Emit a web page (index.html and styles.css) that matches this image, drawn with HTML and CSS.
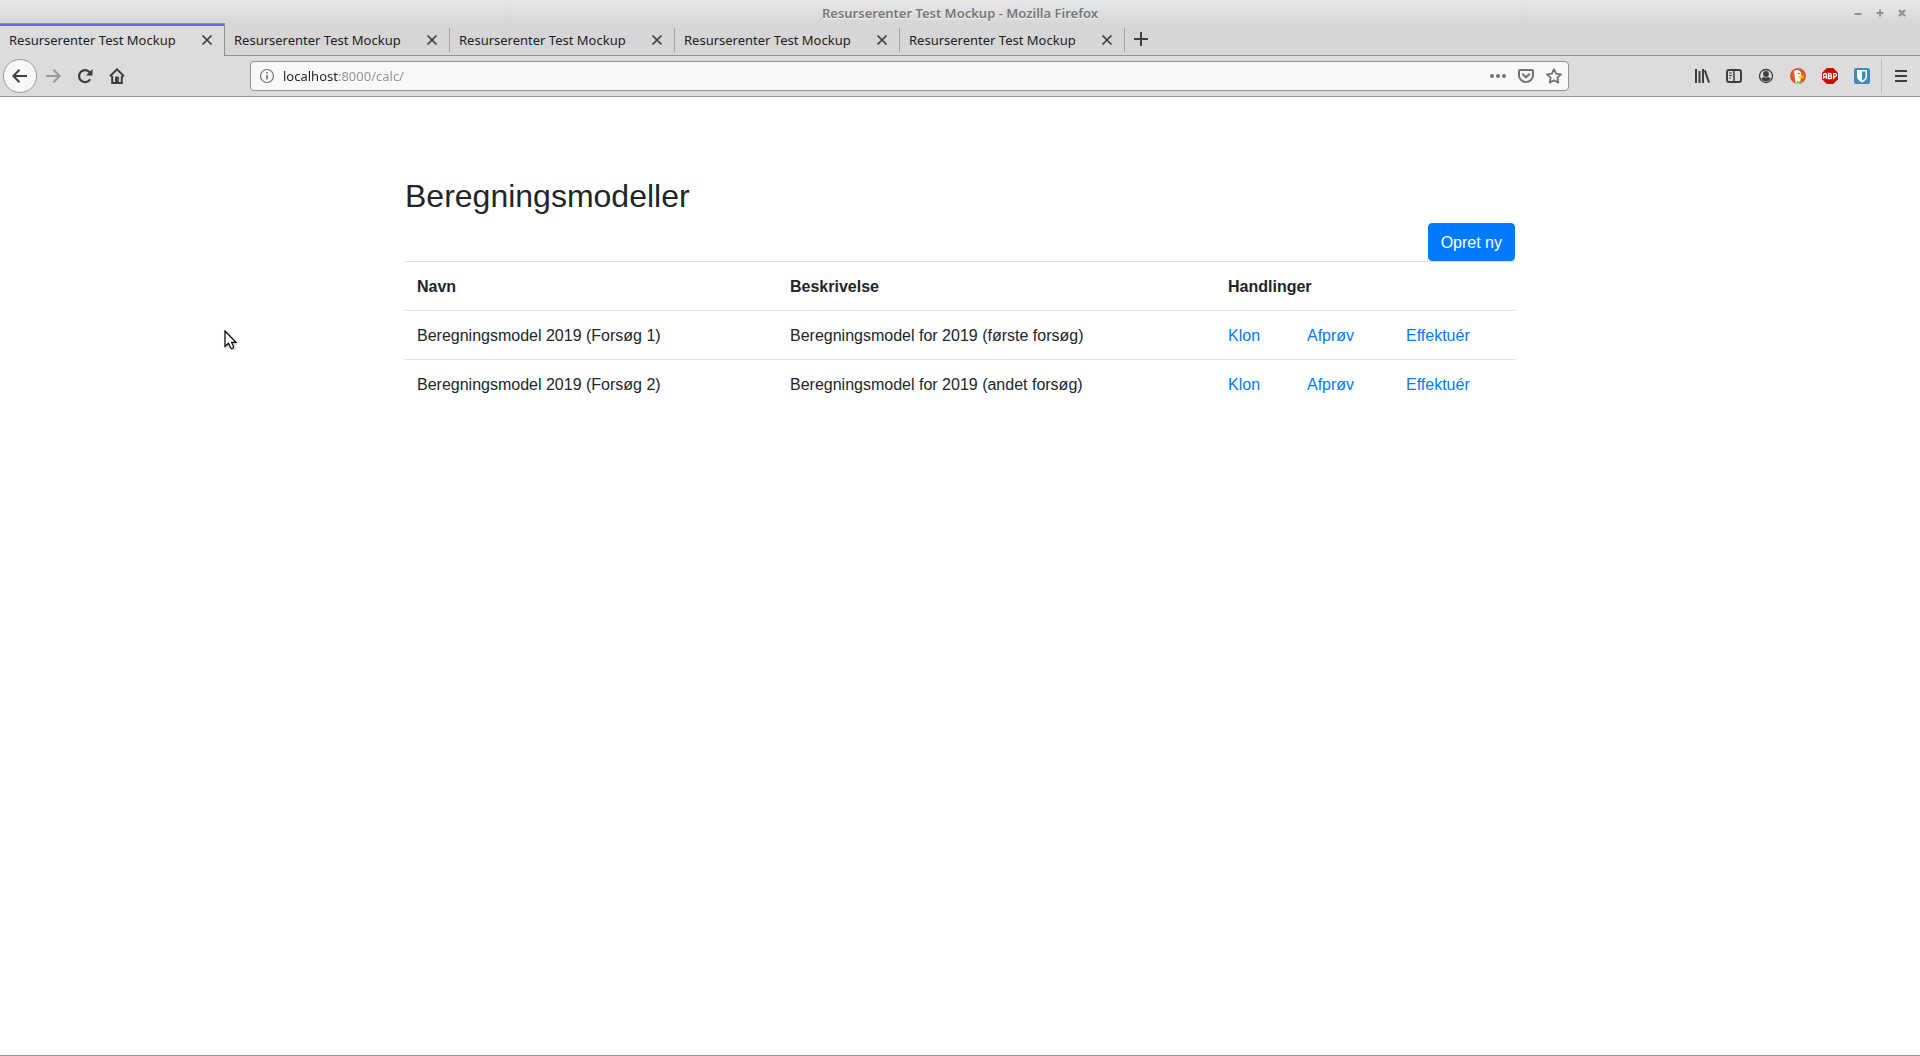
FILE: index.html
```html
<!DOCTYPE html>
<html lang="da">
<head>
<meta charset="utf-8">
<title>Resurserenter Test Mockup</title>
<link rel="stylesheet" href="styles.css">
</head>
<body>
<div class="window">
  <header class="chrome">
    <div class="titlebar">
      <span class="window-title">Resurserenter Test Mockup - Mozilla Firefox</span>
      <div class="window-controls">
        <button type="button" aria-label="Minimer"><svg width="10" height="10" viewBox="0 0 10 10"><path d="M1.500 6h7" stroke-width="2"/></svg></button>
        <button type="button" aria-label="Maksimer"><svg width="10" height="10" viewBox="0 0 10 10"><path d="M1.500 5h7M5 1.500v7" stroke-width="2"/></svg></button>
        <button type="button" aria-label="Luk vindue"><svg width="10" height="10" viewBox="0 0 10 10"><path d="M2 2l6 6M8 2l-6 6" stroke-width="2.400"/></svg></button>
      </div>
    </div>
    <div class="tabs">
      <div class="tab tab-active"><span>Resurserenter Test Mockup</span><button type="button" aria-label="Luk faneblad"><svg width="12" height="12" viewBox="0 0 12 12"><path d="M1.500 1.500l9 9M10.500 1.500l-9 9" stroke-width="1.700"/></svg></button></div>
      <div class="tab"><span>Resurserenter Test Mockup</span><button type="button" aria-label="Luk faneblad"><svg width="12" height="12" viewBox="0 0 12 12"><path d="M1.500 1.500l9 9M10.500 1.500l-9 9" stroke-width="1.700"/></svg></button></div>
      <div class="tab"><span>Resurserenter Test Mockup</span><button type="button" aria-label="Luk faneblad"><svg width="12" height="12" viewBox="0 0 12 12"><path d="M1.500 1.500l9 9M10.500 1.500l-9 9" stroke-width="1.700"/></svg></button></div>
      <div class="tab"><span>Resurserenter Test Mockup</span><button type="button" aria-label="Luk faneblad"><svg width="12" height="12" viewBox="0 0 12 12"><path d="M1.500 1.500l9 9M10.500 1.500l-9 9" stroke-width="1.700"/></svg></button></div>
      <div class="tab"><span>Resurserenter Test Mockup</span><button type="button" aria-label="Luk faneblad"><svg width="12" height="12" viewBox="0 0 12 12"><path d="M1.500 1.500l9 9M10.500 1.500l-9 9" stroke-width="1.700"/></svg></button></div>
      <div class="tab-rest"><button type="button" aria-label="Nyt faneblad"><svg width="16" height="16" viewBox="0 0 16 16"><path d="M8 1v14M1 8h14"/></svg></button></div>
    </div>
    <nav class="toolbar">
      <button type="button" class="tool back" aria-label="Tilbage"><svg width="16" height="16" viewBox="0 0 16 16"><path d="M15 8H1.500M7.500 1.800L1.300 8l6.200 6.200"/></svg></button>
      <button type="button" class="tool forward" aria-label="Frem"><svg width="16" height="16" viewBox="0 0 16 16"><path d="M1 8h13.500M8.500 1.800L14.700 8l-6.200 6.200"/></svg></button>
      <button type="button" class="tool" aria-label="Genindlæs"><svg width="16" height="16" viewBox="0 0 16 16"><path d="M13.200 11.200A6 6 0 1 1 12.600 4.200" stroke-width="2.200"/><path d="M15.500 1v6.500H9z" class="solid"/></svg></button>
      <button type="button" class="tool" aria-label="Hjem"><svg width="16" height="16" viewBox="0 0 16 16"><path d="M1 8.200L8 1.400l7 6.800M3.200 8v7h9.600V8"/><path d="M6 15V9.500a1 1 0 0 1 1-1h2a1 1 0 0 1 1 1V15z" class="solid"/><path d="M9 11.500v1" stroke="#ddd" stroke-width="1"/></svg></button>
      <div class="spacer"></div>
      <div class="urlbar">
        <button type="button" aria-label="Oplysninger om siden"><svg width="16" height="16" viewBox="0 0 16 16"><circle cx="8" cy="8" r="6.500" stroke-width="1.200"/><path d="M8 7v4.500M8 4v1.600" stroke-width="1.700"/></svg></button>
        <input type="text" class="url" value="localhost:8000/calc/" aria-label="Adresse" spellcheck="false">
        <button type="button" aria-label="Sidehandlinger"><svg width="16" height="16" viewBox="0 0 16 16"><g class="solid"><circle cx="2" cy="8" r="2"/><circle cx="8" cy="8" r="2"/><circle cx="14" cy="8" r="2"/></g></svg></button>
        <button type="button" aria-label="Gem til Pocket"><svg width="16" height="16" viewBox="0 0 16 16"><path d="M2 2h12a1 1 0 0 1 1 1v4.500a7 6.500 0 0 1-14 0V3a1 1 0 0 1 1-1z"/><path d="M4.800 6.300L8 9.300l3.200-3" stroke-linecap="round"/></svg></button>
        <button type="button" aria-label="Bogmærk siden"><svg width="16" height="16" viewBox="0 0 16 16"><path d="M8 1.200l2.100 4.500 4.900.6-3.600 3.300.9 5L8 12.200l-4.300 2.400.9-5L1 6.300l4.900-.6z" stroke-width="1.800" stroke-linejoin="round"/></svg></button>
      </div>
      <div class="spacer"></div>
      <button type="button" class="tool" aria-label="Bibliotek"><svg width="16" height="16" viewBox="0 0 16 16"><path d="M2 1v14M5.500 3v12M9 1v14" stroke-width="2"/><path d="M10.800 2.200L15 14.600"/></svg></button>
      <button type="button" class="tool" aria-label="Sidepanel"><svg width="16" height="16" viewBox="0 0 16 16"><rect x="1" y="2" width="14" height="12" rx="2"/><path d="M8 2v12" stroke-width="1.500"/><path d="M3 5h3M3 7.500h3M3 10h2" stroke-width="1"/></svg></button>
      <button type="button" class="tool" aria-label="Konto"><svg width="16" height="16" viewBox="0 0 16 16"><circle cx="8" cy="8" r="6.500" stroke-width="1.300"/><g class="solid"><circle cx="8" cy="6" r="2.900"/><path d="M3.200 10.500Q5 9 6.500 9.200Q8 10 9.500 9.200Q11 9 12.800 10.500A5.500 5.500 0 0 1 3.200 10.500z"/></g></svg></button>
      <button type="button" class="tool" aria-label="DuckDuckGo"><svg width="16" height="16" viewBox="0 0 16 16" class="logo"><circle cx="8" cy="8" r="8" fill="#de5833"/><path d="M4 3.500Q5 1.500 7.500 2Q11 2.400 11 6l-.5 6-1 3.700Q7 15.800 5.600 15Z" fill="#fff"/><circle cx="8.800" cy="5.500" r=".8" fill="#2d4f8e"/><path d="M8.800 8Q11 6.800 14 7.300L12 8.700l2.500.2Q12 10.800 9 10.200z" fill="#fdd20a"/><path d="M6.500 12.800l2.500 1 2.800-1v2.700l-2.600-.6-2.200.6z" fill="#65bc46"/></svg></button>
      <button type="button" class="tool" aria-label="Adblock Plus"><svg width="16" height="16" viewBox="0 0 16 16" class="logo"><path d="M4.700 0h6.600L16 4.700v6.600L11.300 16H4.700L0 11.300V4.700z" fill="#c70d00"/><g fill="none" stroke="#fff" stroke-width="1.300"><path d="M1.500 11V7.200Q1.500 5.500 3 5.500T4.500 7.200V11M1.500 9h3"/><path d="M6.500 5.500h1.600q1.200 0 1.200 1.300T8.100 8.100H6.500h1.800q1.400 0 1.400 1.300t-1.400 1.200H6.500z"/><path d="M11.700 11.200V5.600h1.500q1.400 0 1.400 1.500t-1.400 1.500h-1.500"/></g></svg></button>
      <button type="button" class="tool" aria-label="Bitwarden"><svg width="16" height="16" viewBox="0 0 16 16" class="logo"><rect width="16" height="16" rx="2" fill="#3c8dbc"/><path d="M3 2h10v6.500Q13 12 8 14.500Q3 12 3 8.500z" fill="#fff"/><path d="M8 3.500h3.500v5Q11.500 11 8 12.800z" fill="#3c8dbc"/></svg></button>
      <div class="divider"></div>
      <button type="button" class="tool" aria-label="Menu"><svg width="16" height="16" viewBox="0 0 16 16"><path d="M2 3h12M2 8h12M2 13h12"/></svg></button>
    </nav>
  </header>

  <main class="container">
    <h2>Beregningsmodeller</h2>
    <div class="actions"><button type="button" class="btn">Opret ny</button></div>
    <table class="table">
      <colgroup><col class="col-name"><col class="col-description"><col class="col-clone"><col class="col-try"><col></colgroup>
      <thead>
        <tr><th scope="col">Navn</th><th scope="col">Beskrivelse</th><th scope="colgroup" colspan="3">Handlinger</th></tr>
      </thead>
      <tbody>
        <tr><td>Beregningsmodel 2019 (Forsøg 1)</td><td>Beregningsmodel for 2019 (første forsøg)</td><td><a href="#">Klon</a></td><td><a href="#">Afprøv</a></td><td><a href="#">Effektuér</a></td></tr>
        <tr><td>Beregningsmodel 2019 (Forsøg 2)</td><td>Beregningsmodel for 2019 (andet forsøg)</td><td><a href="#">Klon</a></td><td><a href="#">Afprøv</a></td><td><a href="#">Effektuér</a></td></tr>
      </tbody>
    </table>
  </main>

  <svg class="pointer" width="14" height="22" viewBox="0 0 14 22" aria-hidden="true"><path d="M1 1v15.500l3.500-3.200 2.200 4.700q1 1 2 .3t.8-1.700L7.600 12.300h4.400z"/></svg>
</div>
</body>
</html>
```
FILE: styles.css
```css
* {
  box-sizing: border-box;
}

body {
  margin: 0;
  background: #fff;
  color: #212529;
  font: 16px/24px "Liberation Sans", Arial, sans-serif;
}

button {
  margin: 0;
  padding: 0;
  border: 0;
  background: none;
  font: inherit;
}

.window {
  position: relative;
  min-height: 100vh;
  border-bottom: 1px solid #999;
}

/* Browser chrome */
.chrome {
  background: linear-gradient(#e8e8e8, #d6d6d6 24px);
  color: #222;
  font: 13px/20px "Noto Sans", "Open Sans", sans-serif;
}

.chrome svg {
  display: block;
  fill: none;
  stroke: currentColor;
  stroke-width: 2;
}

.chrome .logo {
  stroke: none;
}

.chrome .solid {
  fill: currentColor;
  stroke: none;
}

.chrome button {
  display: flex;
  align-items: center;
  justify-content: center;
  color: #3e3e3e;
}

.titlebar {
  display: grid;
  grid-template-columns: 1fr auto 1fr;
  height: 23px;
  padding-top: 3px;
}

.window-title {
  grid-column: 2;
  color: #777;
  font-weight: 600;
  text-shadow: 0 1px 0 #f5f5f5;
}

.window-controls {
  display: flex;
  justify-content: flex-end;
  gap: 12px;
  padding-right: 13px;
}

.chrome .window-controls button {
  color: #929292;
}

.tabs {
  display: flex;
  height: 33px;
}

.tab {
  display: flex;
  align-items: center;
  justify-content: space-between;
  flex: 0 1 225px;
  min-width: 0;
  padding: 2px 12px 0 9px;
  border-bottom: 1px solid #929292;
  background: linear-gradient(#a4a4a4, #a4a4a4) right 5px / 1px 24px no-repeat;
  white-space: nowrap;
}

.tab-active {
  border: 1px solid #929292;
  border-width: 1px 1px 0 0;
  padding: 0 11px 0 9px;
  background: #dcdcdc;
  box-shadow: inset 0 2px #5b73cf;
}

.tab-rest {
  display: flex;
  flex: 1;
  padding-left: 8px;
  border-bottom: 1px solid #929292;
}

.toolbar {
  display: flex;
  align-items: center;
  height: 41px;
  padding: 0 3px;
  border-bottom: 1px solid #929292;
  background: #dcdcdc;
}

.tool {
  flex: none;
  width: 32px;
  height: 32px;
}

.chrome .back {
  width: 34px;
  height: 34px;
  border: 1px solid #999;
  border-radius: 50%;
  background: #f8f8f8;
}

.chrome .forward {
  color: #999;
}

.spacer {
  flex: 0 1 117px;
}

.urlbar {
  display: flex;
  flex: 1;
  height: 30px;
  padding: 0 0 0 2px;
  border: 1px solid #929292;
  border-radius: 4px;
  background: #f8f8f8;
}

.chrome .urlbar button {
  width: 28px;
  color: #737373;
}

/* The host part of the address is darker than the port and path. */
.url {
  flex: 1;
  min-width: 0;
  padding: 0 0 0 2px;
  border: 0;
  outline: 0;
  background: linear-gradient(90deg, #222 58px, #909090 58px) text;
  color: #737373;
  -webkit-text-fill-color: transparent;
  font: inherit;
}

.divider {
  width: 1px;
  height: 34px;
  margin: 0 3px;
  background: #bcbcbc;
}

/* Page */
.container {
  max-width: 1140px;
  margin: 0 auto;
  padding: 80px 15px 0;
}

h2 {
  margin: 0 0 8px;
  font-size: 32px;
  font-weight: 400;
  line-height: 38px;
}

.actions {
  display: flex;
  justify-content: flex-end;
}

.btn {
  padding: 7px 12px 5px;
  border: 1px solid #007bff;
  border-radius: 4px;
  background: #007bff;
  color: #fff;
}

.table {
  width: 100%;
  border-collapse: collapse;
  table-layout: fixed;
}

.table th,
.table td {
  padding: 13px 12px 11px;
  border-top: 1px solid #dee2e6;
  text-align: left;
}

.col-name {
  width: 373px;
}

.col-description {
  width: 438px;
}

.col-clone {
  width: 79px;
}

.col-try {
  width: 99px;
}

a {
  color: #007bff;
  text-decoration: none;
}

.pointer {
  position: absolute;
  left: 224px;
  top: 330px;
  fill: #fff;
  stroke: #000;
  stroke-width: 1.2;
  filter: drop-shadow(1px 1px 1px #0004);
}
```
